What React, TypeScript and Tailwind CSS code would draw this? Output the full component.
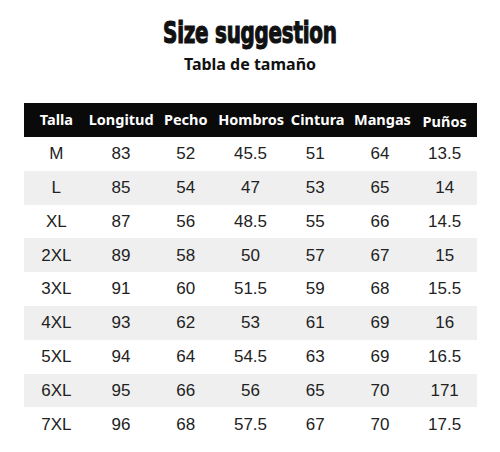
import React from 'react';

const HEADERS = ['Talla', 'Longitud', 'Pecho', 'Hombros', 'Cintura', 'Mangas', 'Puños'];

const ROWS: string[][] = [
  ['M', '83', '52', '45.5', '51', '64', '13.5'],
  ['L', '85', '54', '47', '53', '65', '14'],
  ['XL', '87', '56', '48.5', '55', '66', '14.5'],
  ['2XL', '89', '58', '50', '57', '67', '15'],
  ['3XL', '91', '60', '51.5', '59', '68', '15.5'],
  ['4XL', '93', '62', '53', '61', '69', '16'],
  ['5XL', '94', '64', '54.5', '63', '69', '16.5'],
  ['6XL', '95', '66', '56', '65', '70', '171'],
  ['7XL', '96', '68', '57.5', '67', '70', '17.5'],
];

const App: React.FC = () => {
  return (
    <div className="w-[500px] h-[452px] bg-white overflow-hidden">
      {/* Titulo */}
      <div className="flex flex-col items-center pt-[17px]">
        <h1 className="scale-x-[0.79] scale-y-[1.08] text-[28px] leading-[32px] font-bold text-[#111] tracking-[-0.3px] [-webkit-text-stroke:1.1px_#111] font-['DejaVu_Sans_Condensed','DejaVu_Sans',sans-serif]">
          Size suggestion
        </h1>
        <p className="mt-[5px] text-[16px] leading-[20px] font-bold text-[#111] font-['Noto_Sans',sans-serif]">
          Tabla de tamaño
        </p>
      </div>

      {/* Tabla */}
      <div className="mx-[24px] mt-[29px] w-[453px]">
        <div className="grid grid-cols-7 h-[34px] items-center bg-[#0a0a0a] text-white text-[14.5px] font-bold font-['Noto_Sans',sans-serif]">
          {HEADERS.map((h, i) => (
            <span
              key={h}
              className={`text-center whitespace-nowrap ${i === 6 ? 'pt-[3px]' : ''} ${i === 4 ? 'pl-[5px]' : ''} ${i === 5 ? 'pl-[5px]' : ''}`}
            >
              {h}
            </span>
          ))}
        </div>
        {ROWS.map((row, idx) => (
          <div
            key={row[0]}
            className={`grid grid-cols-7 h-[33.8px] items-center text-[17px] text-[#222] font-['Liberation_Sans',Arial,sans-serif] ${idx % 2 === 1 ? 'bg-[#efefef]' : 'bg-white'}`}
          >
            {row.map((cell, j) => (
              <span key={j} className="text-center">{cell}</span>
            ))}
          </div>
        ))}
      </div>
    </div>
  );
};

export default App;
